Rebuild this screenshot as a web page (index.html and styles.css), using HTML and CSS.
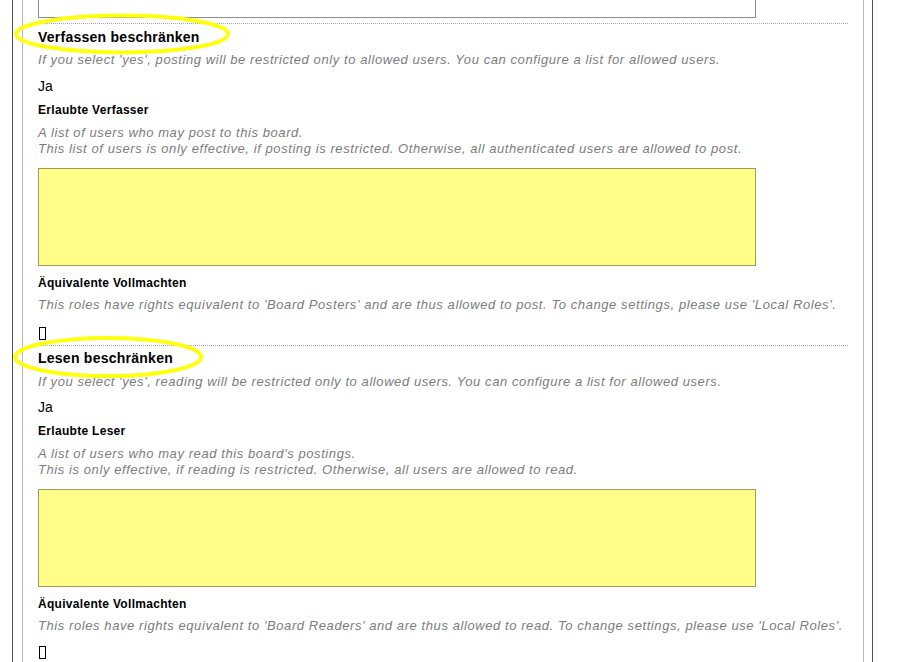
FILE: index.html
```html
<!DOCTYPE html>
<html>
<head>
<meta charset="utf-8">
<link rel="stylesheet" href="styles.css">
</head>
<body>
<div class="frame">
  <div class="panel">
    <div class="top-area"><textarea class="prev-input"></textarea></div>

    <div class="field">
      <svg class="mark mark-1" width="222" height="46" viewBox="0 0 222 46"><ellipse cx="111" cy="23" rx="106" ry="18.5" fill="none" stroke="#ffff10" stroke-width="4"/></svg>
      <div class="field-title">Verfassen beschränken</div>
      <div class="help">If you select 'yes', posting will be restricted only to allowed users. You can configure a list for allowed users.</div>
      <div class="value">Ja</div>
      <div class="sublabel">Erlaubte Verfasser</div>
      <div class="help help-block">A list of users who may post to this board.<br>This list of users is only effective, if posting is restricted. Otherwise, all authenticated users are allowed to post.</div>
      <textarea class="users"></textarea>
      <div class="sublabel sublabel-eq">Äquivalente Vollmachten</div>
      <div class="help help-eq">This roles have rights equivalent to 'Board Posters' and are thus allowed to post. To change settings, please use 'Local Roles'.</div>
      <div class="missing"><span class="glyph"></span></div>
    </div>

    <div class="field">
      <svg class="mark mark-2" width="196" height="46" viewBox="0 0 196 46"><ellipse cx="97" cy="23" rx="93" ry="19" fill="none" stroke="#ffff10" stroke-width="4"/></svg>
      <div class="field-title">Lesen beschränken</div>
      <div class="help">If you select 'yes', reading will be restricted only to allowed users. You can configure a list for allowed users.</div>
      <div class="value">Ja</div>
      <div class="sublabel">Erlaubte Leser</div>
      <div class="help help-block">A list of users who may read this board's postings.<br>This is only effective, if reading is restricted. Otherwise, all users are allowed to read.</div>
      <textarea class="users"></textarea>
      <div class="sublabel sublabel-eq">Äquivalente Vollmachten</div>
      <div class="help help-eq">This roles have rights equivalent to 'Board Readers' and are thus allowed to read. To change settings, please use 'Local Roles'.</div>
      <div class="missing"><span class="glyph"></span></div>
    </div>
  </div>
</div>
</body>
</html>
```

FILE: styles.css
```css
html, body {
  margin: 0;
  padding: 0;
  background: #ffffff;
  overflow: hidden;
}
body {
  font-family: "Liberation Sans", Arial, sans-serif;
  color: #000;
}
.frame {
  margin-left: 12px;
  width: 861px;
  min-height: 662px;
  border-left: 1px solid #505050;
  border-right: 1px solid #505050;
  padding-left: 9px;
  padding-right: 8px;
  box-sizing: border-box;
}
.panel {
  min-height: 662px;
  border-left: 1px solid #b8b8b8;
  border-right: 1px solid #b8b8b8;
  padding: 0 15px 0 15px;
}
.top-area {
  height: 18px;
  margin-bottom: 5px;
}
.prev-input {
  display: block;
  box-sizing: border-box;
  width: 718px;
  height: 18px;
  margin: 0;
  padding: 0;
  border: 1px solid #8c8c8c;
  border-top: 0;
  background: #fff;
  resize: none;
}
.field {
  position: relative;
  border-top: 1px dotted #a8a8b8;
  padding-top: 5px;
  height: 316px;
  box-sizing: content-box;
}
.field + .field {
  padding-top: 4px;
  height: 317px;
}
.mark {
  position: absolute;
  pointer-events: none;
}
.mark-1 { left: -27px; top: -13px; }
.mark-2 { left: -27px; top: -12px; }
.field-title {
  font-size: 14px;
  font-weight: bold;
  line-height: 17px;
  letter-spacing: 0.25px;
  margin-bottom: 6px;
}
.field + .field .field-title {
  margin-bottom: 7px;
}
.help {
  font-size: 13px;
  font-style: italic;
  line-height: 16px;
  letter-spacing: 0.58px;
  color: #7c7c7c;
}
.value {
  font-size: 14px;
  line-height: 17px;
  margin-top: 10px;
}
.field + .field .value {
  margin-top: 9px;
}
.sublabel {
  font-size: 12px;
  font-weight: bold;
  line-height: 15px;
  letter-spacing: 0.3px;
  margin-top: 8px;
}
.help-block {
  margin-top: 7px;
}
.users {
  display: block;
  box-sizing: border-box;
  width: 718px;
  height: 98px;
  margin: 11px 0 0 0;
  padding: 0;
  border: 1px solid #9c9c5c;
  background: #ffff88;
  resize: none;
}
.sublabel-eq {
  margin-top: 10px;
}
.help-eq {
  margin-top: 6px;
}
.missing {
  margin-top: 14px;
  height: 14px;
  line-height: 14px;
}
.field + .field .missing {
  margin-top: 12px;
}
.glyph {
  display: inline-block;
  margin-left: 1px;
  width: 5px;
  height: 11px;
  border: 1px solid #000;
}
```
